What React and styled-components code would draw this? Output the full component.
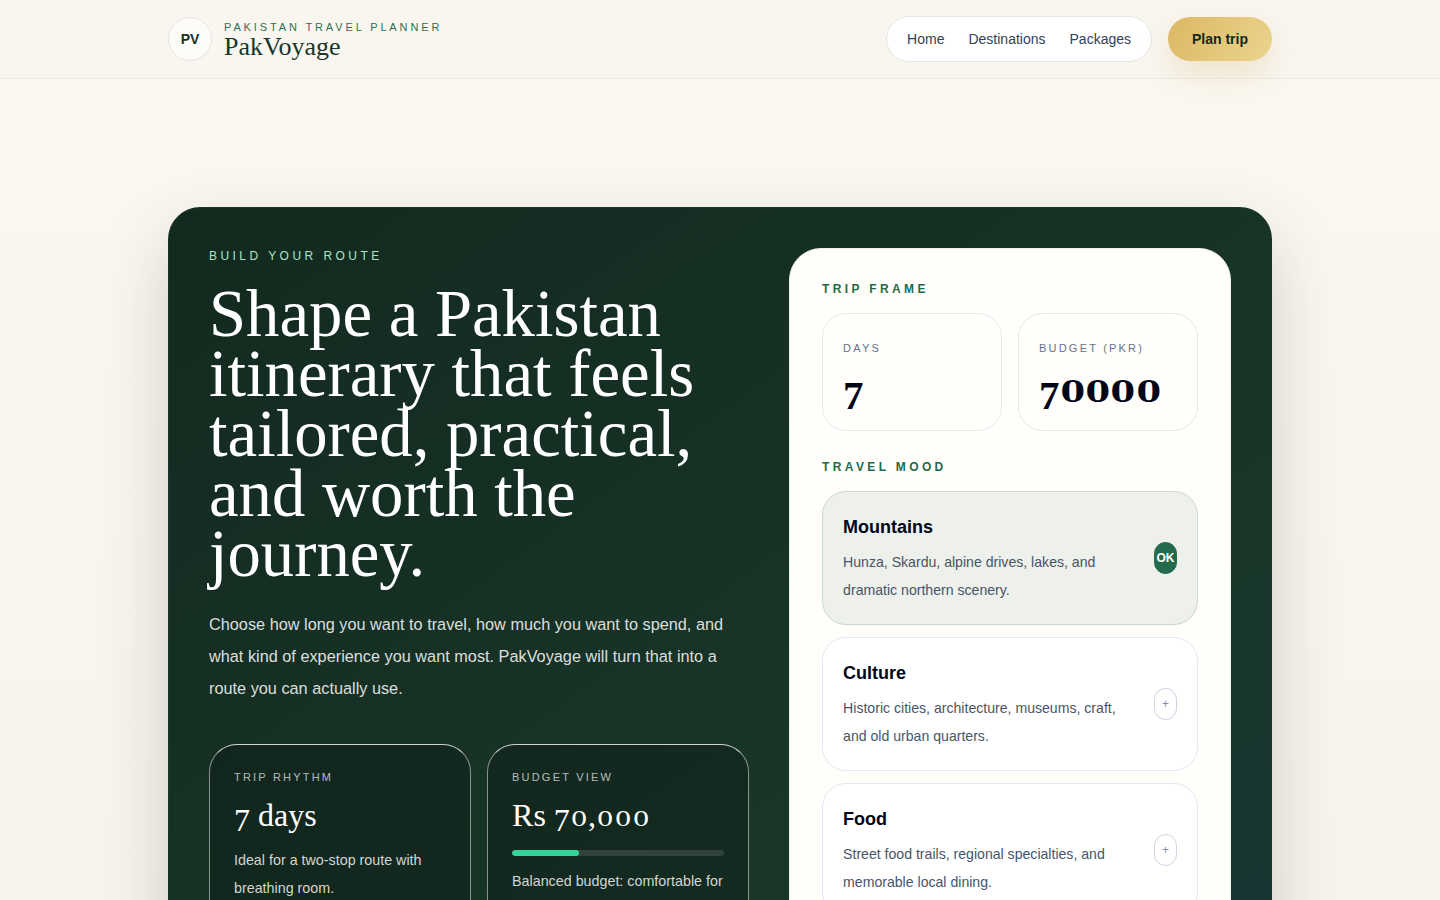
// Libraries
import React from 'react'
import styled, { createGlobalStyle } from 'styled-components'

const serif = `"Liberation Serif", "DejaVu Serif", serif`
const sans = `"Liberation Sans", Arial, sans-serif`

const moods = [
  { title: 'Mountains', text: 'Hunza, Skardu, alpine drives, lakes, and dramatic northern scenery.', active: true },
  { title: 'Culture', text: 'Historic cities, architecture, museums, craft, and old urban quarters.' },
  { title: 'Food', text: 'Street food trails, regional specialties, and memorable local dining.' },
]

// Old-style figures: the serif only has lining digits, so 0 and 7 get reshaped
const Figures = ({ text, zero: Zero }) =>
  [...text].map((char, i) => {
    if (char === '0') return <Zero key={i}>0</Zero>
    if (char === '7') return <Seven key={i}>7</Seven>
    return char
  })

// App
const App = () => (
  <Page>
    <GlobalStyle />
    <Header>
      <HeaderInner>
        <Brand>
          <Mark>PV</Mark>
          <BrandText>
            <Tagline>Pakistan travel planner</Tagline>
            <BrandName>PakVoyage</BrandName>
          </BrandText>
        </Brand>
        <Actions>
          <Nav>
            <NavLink href="#home">Home</NavLink>
            <NavLink href="#destinations">Destinations</NavLink>
            <NavLink href="#packages">Packages</NavLink>
          </Nav>
          <PlanButton>Plan trip</PlanButton>
        </Actions>
      </HeaderInner>
    </Header>

    <Hero>
      <Intro>
        <Eyebrow>Build your route</Eyebrow>
        <Headline>Shape a Pakistan itinerary that feels tailored, practical, and worth the journey.</Headline>
        <Lead>
          Choose how long you want to travel, how much you want to spend, and what kind of experience you want
          most. PakVoyage will turn that into a route you can actually use.
        </Lead>
        <Stats>
          <Stat>
            <StatLabel>Trip rhythm</StatLabel>
            <StatValue>
              <Figures text="7 days" zero={StatZero} />
            </StatValue>
            <StatText>Ideal for a two-stop route with breathing room.</StatText>
          </Stat>
          <Stat>
            <StatLabel>Budget view</StatLabel>
            <StatValue>
              <Figures text="Rs 70,000" zero={StatZero} />
            </StatValue>
            <Track>
              <Fill style={{ width: `${(70000 / 221000) * 100}%` }} />
            </Track>
            <StatText>Balanced budget: comfortable for most routes.</StatText>
          </Stat>
        </Stats>
      </Intro>

      <Panel>
        <SectionLabel>Trip frame</SectionLabel>
        <Fields>
          <Field>
            <FieldLabel>Days</FieldLabel>
            <FieldValue>
              <Figures text="7" zero={FieldZero} />
            </FieldValue>
          </Field>
          <Field>
            <FieldLabel>Budget (PKR)</FieldLabel>
            <FieldValue>
              <Figures text="70000" zero={FieldZero} />
            </FieldValue>
          </Field>
        </Fields>
        <SectionLabel>Travel mood</SectionLabel>
        <MoodList>
          {moods.map(mood => (
            <Mood key={mood.title} $active={mood.active}>
              <div>
                <MoodTitle>{mood.title}</MoodTitle>
                <MoodText>{mood.text}</MoodText>
              </div>
              <MoodBadge $active={mood.active}>{mood.active ? 'OK' : '+'}</MoodBadge>
            </Mood>
          ))}
        </MoodList>
      </Panel>
    </Hero>
  </Page>
)

// Styles
const GlobalStyle = createGlobalStyle`
  * {
    box-sizing: border-box;
  }

  html, body {
    margin: 0;
    height: 100%;
    overflow: hidden;
  }

  body {
    font-family: ${sans};
    background: #faf7f1;
  }
`

const Page = styled.div`
  height: 900px;
  overflow: hidden;
  background: linear-gradient(180deg, #fbf8f1 0%, #f8f4ed 100%);
`

const Header = styled.header`
  height: 79px;
  background: #f9f6f0;
  border-bottom: 1px solid #ebe9e4;
`

const HeaderInner = styled.div`
  width: 1104px;
  height: 78px;
  margin: 0 auto;
  display: flex;
  align-items: center;
  justify-content: space-between;
`

const Brand = styled.div`
  display: flex;
  align-items: center;
  gap: 12px;
`

const Mark = styled.div`
  width: 44px;
  height: 44px;
  border-radius: 50%;
  border: 1px solid #e6e6e1;
  background: #fdfcf8;
  color: #16322a;
  display: flex;
  align-items: center;
  justify-content: center;
  font-size: 14px;
  font-weight: 700;
`

const BrandText = styled.div`
  display: flex;
  flex-direction: column;
  margin-top: 2px;
`

const Tagline = styled.div`
  color: #2f6f55;
  font-size: 11px;
  line-height: 14px;
  letter-spacing: 2.87px;
  text-transform: uppercase;
`

const BrandName = styled.div`
  color: #18362a;
  font-family: ${serif};
  font-size: 26px;
  line-height: 26px;
`

const Actions = styled.div`
  display: flex;
  align-items: center;
  gap: 16px;
`

const Nav = styled.nav`
  height: 46px;
  padding: 0 20px;
  display: flex;
  align-items: center;
  gap: 24px;
  background: #fff;
  border: 1px solid #e3e6e6;
  border-radius: 999px;
`

const NavLink = styled.a`
  color: #334155;
  font-size: 14px;
  text-decoration: none;
`

const PlanButton = styled.button`
  width: 104px;
  height: 44px;
  border: 0;
  border-radius: 999px;
  background: linear-gradient(120deg, #dcb864 0%, #ebd48d 100%);
  box-shadow: 0 14px 30px rgba(210, 170, 90, 0.24);
  color: #14281f;
  font-family: ${sans};
  font-size: 14px;
  font-weight: 700;
`

const Hero = styled.section`
  width: 1104px;
  margin: 128px auto 0;
  padding: 40px;
  display: grid;
  grid-template-columns: 1.1fr 0.9fr;
  gap: 40px;
  align-items: start;
  min-height: 1000px;
  background: linear-gradient(145deg, #13291f 0%, #193629 62%, #15343a 100%);
  border: 1px solid #1b3328;
  border-radius: 32px;
  box-shadow: 0 30px 70px rgba(24, 50, 38, 0.2);
`

const Intro = styled.div`
  min-width: 0;
`

const Eyebrow = styled.div`
  color: #a9e4c6;
  font-size: 12px;
  line-height: 16px;
  letter-spacing: 3.45px;
  text-transform: uppercase;
`

const Headline = styled.h1`
  margin: 20px 0 0;
  color: #fff;
  font-family: ${serif};
  font-size: 66.7px;
  font-weight: 400;
  line-height: 60px;
`

const Lead = styled.p`
  margin: 24px 0 0;
  color: rgba(255, 255, 255, 0.86);
  font-size: 16.3px;
  line-height: 32px;
`

const Stats = styled.div`
  margin-top: 40px;
  display: grid;
  grid-template-columns: 1fr 1fr;
  gap: 16px;
`

const Stat = styled.div`
  padding: 24px;
  background: rgba(8, 20, 16, 0.32);
  border: 1px solid rgba(255, 255, 255, 0.5);
  border-top-color: rgba(255, 255, 255, 0.8);
  border-bottom: 0;
  border-radius: 28px;
`

const StatLabel = styled.div`
  color: rgba(255, 255, 255, 0.7);
  font-size: 11px;
  line-height: 16px;
  letter-spacing: 2.2px;
  text-transform: uppercase;
`

const StatValue = styled.div`
  height: 40px;
  margin-top: 10px;
  color: #fff;
  font-family: ${serif};
  font-size: 32px;
  line-height: 40px;
`

const StatText = styled.p`
  margin: 11px 0 0;
  color: rgba(255, 255, 255, 0.82);
  font-size: 14.3px;
  line-height: 28px;
`

const Seven = styled.span`
  display: inline-block;
  vertical-align: -0.16em;
`

const StatZero = styled.span`
  display: inline-block;
  width: 0.86em;
  font-family: "DejaVu Serif", serif;
  font-size: 0.66em;
  line-height: 1;
  text-align: center;
  transform: scaleX(1.25);
`

const FieldZero = styled.span`
  display: inline-block;
  width: 0.85em;
  font-family: "DejaVu Serif", serif;
  font-size: 0.73em;
  line-height: 1;
  text-align: center;
  transform: scaleX(1.18);
`

const Track = styled.div`
  height: 6px;
  margin: 15px 0 2px;
  border-radius: 999px;
  background: rgba(255, 255, 255, 0.12);
  overflow: hidden;
`

const Fill = styled.div`
  height: 100%;
  border-radius: 999px;
  background: #34d399;
`

const Panel = styled.div`
  padding: 32px;
  background: #fffefb;
  border: 1px solid #eef0ee;
  border-radius: 32px;
`

const SectionLabel = styled.div`
  color: #1f6b4a;
  font-size: 12px;
  font-weight: 700;
  line-height: 16px;
  letter-spacing: 0.28em;
  text-transform: uppercase;
`

const Fields = styled.div`
  margin: 16px 0 28px;
  display: grid;
  grid-template-columns: 1fr 1fr;
  gap: 16px;
`

const Field = styled.div`
  height: 118px;
  padding: 20px;
  border: 1px solid #e2e8f0;
  border-radius: 24px;
`

const FieldLabel = styled.div`
  color: #64748b;
  font-size: 11px;
  line-height: 28px;
  letter-spacing: 0.2em;
  text-transform: uppercase;
`

const FieldValue = styled.div`
  height: 40px;
  margin-top: 6px;
  color: #020617;
  font-family: ${serif};
  font-size: 41px;
  font-weight: 700;
  line-height: 40px;
`

const MoodList = styled.div`
  margin-top: 16px;
  display: flex;
  flex-direction: column;
  gap: 12px;
`

const Mood = styled.div`
  min-height: 134px;
  padding: 20px;
  display: flex;
  align-items: center;
  justify-content: space-between;
  gap: 16px;
  background: ${p => (p.$active ? '#edf0eb' : '#fff')};
  border: 1px solid ${p => (p.$active ? '#cbd8cf' : '#e2e8f0')};
  border-radius: 24px;
`

const MoodTitle = styled.div`
  color: #020617;
  font-size: 18px;
  font-weight: 700;
  line-height: 30px;
`

const MoodText = styled.p`
  margin: 6px 0 0;
  color: #475569;
  font-size: 14.1px;
  line-height: 28px;
`

const MoodBadge = styled.span`
  flex: none;
  height: 32px;
  padding: 0 ${p => (p.$active ? '1.5px' : '7px')};
  display: flex;
  align-items: center;
  justify-content: center;
  border-radius: 999px;
  border: 1px solid ${p => (p.$active ? '#236b4c' : '#cbd5e1')};
  background: ${p => (p.$active ? '#236b4c' : '#fff')};
  color: ${p => (p.$active ? '#fff' : '#8494a9')};
  font-size: 12px;
  font-weight: ${p => (p.$active ? 700 : 400)};
`

export default App
